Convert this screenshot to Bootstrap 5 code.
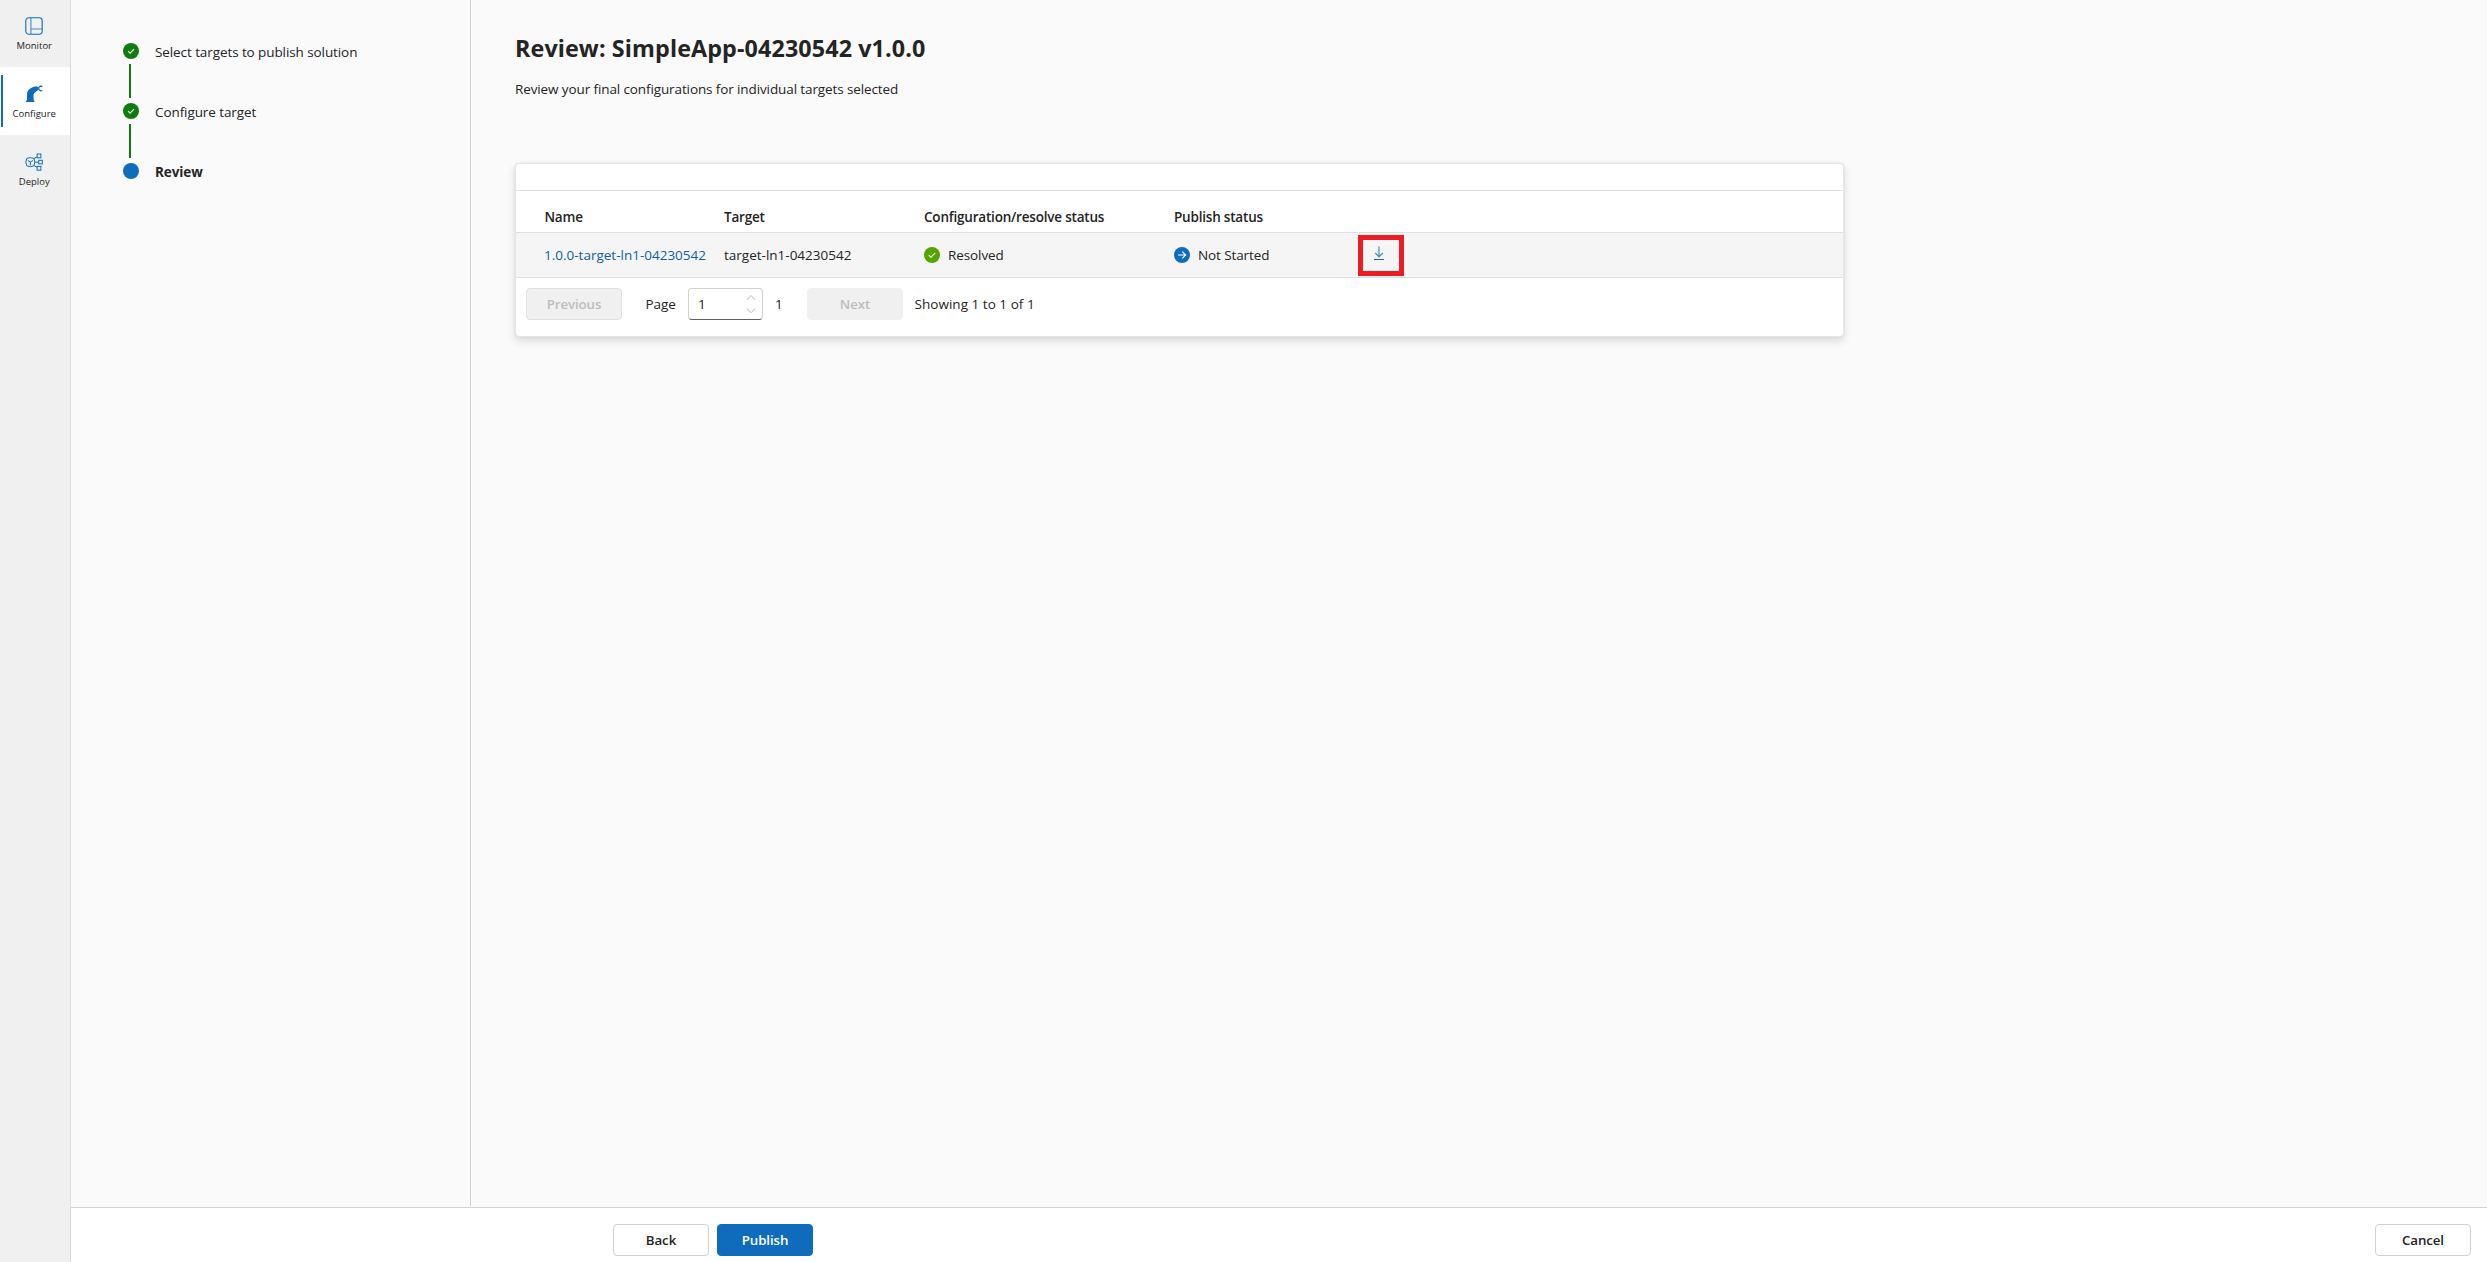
<!DOCTYPE html>
<html lang="en">
<head>
<meta charset="utf-8">
<meta name="viewport" content="width=device-width, initial-scale=1">
<title>Review: SimpleApp-04230542 v1.0.0</title>
<link href="https://cdn.jsdelivr.net/npm/bootstrap@5.3.0/dist/css/bootstrap.min.css" rel="stylesheet">
<style>
html,body{height:100%}
body{font-family:"Open Sans","Noto Sans",sans-serif;font-size:13.5px;letter-spacing:-.09px;line-height:20px;color:#242424;background:#fafafa;overflow:hidden}
svg{display:block;flex:none}
.rail{width:71px;background:#f0f0f0;border-right:1px solid #dcdcdc;flex:none}
.rail a{height:68px;padding:18px 1.5px 0 0;color:#242424;font-size:9.5px;letter-spacing:0;line-height:14px;gap:4px}
.rail a:first-child{height:67px;padding-top:17px}
.rail a.active{background:#fff}
.rail a.active::before{content:"";position:absolute;left:1px;top:8px;width:2px;height:52px;background:#0f6cbd}
.steps{width:400px;border-right:1px solid #d1d1d1;padding:43px 0 0 52px;margin-bottom:1px;flex:none}
.step-row{height:60px;gap:16px}
.step-row .mark-col{width:16px;flex:none}
.step-row .txt{margin-top:-1px}
.line-seg{width:2px;height:34px;margin:5px 0 0 6px;background:#107c10}
.main-area{padding:32px 0 0 44px}
.ttl{font-size:23.3px;letter-spacing:.12px;line-height:32px;font-weight:700;margin:0}
.sub-line{margin-top:15px;letter-spacing:-.11px}
.panel{width:1329px;margin-top:64px;border:1px solid #e6e6e6;border-radius:4px;box-shadow:0 4px 8px rgba(0,0,0,.13),0 0 2px rgba(0,0,0,.1);background:#fff}
.band{height:27px;border-bottom:1px solid #e0e0e0}
.grid-row{padding-left:28.5px;border-bottom:1px solid #e0e0e0}
.grid-row>div{flex:none}
.c1{width:179.5px}.c2{width:200px}.c3{width:250px}.c4{width:184px}
.head-row{height:42px;font-weight:600;letter-spacing:-.2px;padding-top:16px}
.data-row{height:45px;background:#f5f5f5;letter-spacing:0}
.data-row a{color:#115ea3;margin-left:-.5px}
.state{gap:8px}
.state span{letter-spacing:-.1px}
.pager{padding:10px 0 16px 10px}
.pg-label{width:42.5px;margin-left:23.5px}
.pg-total{width:32px;margin-left:12px}
.pg-info{margin-left:11.5px;letter-spacing:.03px}
.abtn{width:96px;height:32px;padding:0;font-size:13.3px;letter-spacing:-.1px;line-height:20px;font-weight:600;border:1px solid #d1d1d1;border-radius:4px;background:#fff;color:#242424}
.abtn:disabled{background:#f0f0f0;color:#bdbdbd;border-color:#e0e0e0;opacity:1}
.abtn.flat:disabled{border-color:#f0f0f0}
.abtn.pri{background:#0f6cbd;border-color:#0f6cbd;color:#fff}
.spin{width:75px;height:32px;border:1px solid #d1d1d1;border-bottom-color:#616161;border-radius:4px;padding:0 5px 0 9px;background:#fff}
.hilite{width:46px;height:41px;border:5px solid #ed1c24;padding:6px 0 0 10px}
.foot{height:55px;background:#fff;border-top:1px solid #d1d1d1;padding:16px 16px 6px 542px}
</style>
</head>
<body class="d-flex">
<nav class="rail d-flex flex-column">
  <a class="d-flex flex-column align-items-center text-decoration-none" href="#">
    <svg width="18" height="18" viewBox="0 0 18 18" fill="none" stroke="#0f6cbd"><rect x=".8" y=".8" width="16.4" height="16.4" rx="3.200" stroke-width="1.100"/><path d="M5.900 1v16M6 12h11" stroke-width="1.100" opacity=".75"/></svg>
    <span>Monitor</span></a>
  <a class="active position-relative d-flex flex-column align-items-center text-decoration-none" href="#">
    <svg width="18" height="18" viewBox="0 0 18 18"><path d="M1 17v-1.200l1-.6V9.500C2 5.500 5.600 2.200 10.500 1.600l1.700-.3 1.200 3.400-3.300 2.500c-1.300 1-1.700 2.200-1.600 3.600l.2 4.400.8.600V17z" fill="#0f6cbd"/><path d="M12 3l2-.4M17.400 1.300 15.300 1.100 13.600 2.600 13.900 4.500 15.500 5.900 17.200 5.700" fill="none" stroke="#0f6cbd" stroke-width="1.200"/></svg>
    <span>Configure</span></a>
  <a class="d-flex flex-column align-items-center text-decoration-none" href="#">
    <svg width="18" height="18" viewBox="0 0 18 18" fill="none" stroke="#0f6cbd"><path d="M5.300 4.600 1.800 5.400.8 9l1 3.800 3.500.9 3.600-.9L9.900 9 8.900 5.400zM2.800 7.500 5.300 9l2.700-1.500M5.300 9v3.300M8.900 5.600 12.100 3.800M9.900 9.200h3.600M8.900 12.500l3.200 1.700"/><rect x="12.100" y="1" width="3.800" height="3.800"/><rect x="13.700" y="7.300" width="3.600" height="3.600"/><rect x="12.100" y="13.400" width="3.800" height="3.800"/></svg>
    <span>Deploy</span></a>
</nav>
<div class="flex-grow-1 d-flex flex-column">
  <div class="flex-grow-1 d-flex">
    <aside class="steps">
      <div class="step-row d-flex">
        <div class="mark-col"><svg width="16" height="16"><circle cx="8" cy="8" r="8" fill="#107c10"/><path d="m5.200 8.200 1.900 1.900 3.900-3.900" fill="none" stroke="#fff" stroke-width="1.100"/></svg><div class="line-seg"></div></div>
        <span class="txt">Select targets to publish solution</span></div>
      <div class="step-row d-flex">
        <div class="mark-col"><svg width="16" height="16"><circle cx="8" cy="8" r="8" fill="#107c10"/><path d="m5.200 8.200 1.900 1.900 3.900-3.900" fill="none" stroke="#fff" stroke-width="1.100"/></svg><div class="line-seg"></div></div>
        <span class="txt">Configure target</span></div>
      <div class="step-row d-flex">
        <div class="mark-col"><svg width="16" height="16"><circle cx="8" cy="8" r="8" fill="#0f6cbd"/></svg></div>
        <span class="txt fw-bold">Review</span></div>
    </aside>
    <main class="main-area">
      <h1 class="ttl">Review: SimpleApp-04230542 v1.0.0</h1>
      <div class="sub-line">Review your final configurations for individual targets selected</div>
      <div class="panel">
        <div class="band"></div>
        <div class="grid-row head-row d-flex">
          <div class="c1">Name</div><div class="c2">Target</div><div class="c3">Configuration/resolve status</div><div class="c4">Publish status</div>
        </div>
        <div class="grid-row data-row d-flex align-items-center">
          <div class="c1"><a class="text-decoration-none" href="#">1.0.0-target-ln1-04230542</a></div>
          <div class="c2">target-ln1-04230542</div>
          <div class="c3 state d-flex align-items-center"><svg width="16" height="16"><circle cx="8" cy="8" r="8" fill="#57a300"/><path d="m4.800 8.200 2.100 2.100 4.300-4.300" fill="none" stroke="#fff" stroke-width="1.100"/></svg><span>Resolved</span></div>
          <div class="c4 state d-flex align-items-center"><svg width="16" height="16"><circle cx="8" cy="8" r="8" fill="#0f6cbd"/><path d="M4 8h7.600M8.300 4.600 11.700 8l-3.400 3.400" fill="none" stroke="#fff" stroke-width="1.100"/></svg><span>Not Started</span></div>
          <div class="hilite"><svg width="12" height="14" viewBox="0 0 12 14" fill="none" stroke="#0f6cbd"><path d="M6 .5v10M2.200 7 6 10.800 9.800 7" stroke-width="1.200" opacity=".75"/><path d="M1 13.500h10"/></svg></div>
        </div>
        <div class="pager d-flex align-items-center">
          <button class="btn abtn" disabled>Previous</button>
          <span class="pg-label">Page</span>
          <div class="spin d-flex align-items-center justify-content-between"><span>1</span><svg width="12" height="20" viewBox="0 0 12 20" fill="none" stroke="#b5b5b5"><path d="m1.800 5.700 4.200-4.200 4.200 4.200M1.800 14.500 6 18.700l4.200-4.200"/></svg></div>
          <span class="pg-total">1</span>
          <button class="btn abtn flat" disabled>Next</button>
          <span class="pg-info">Showing 1 to 1 of 1</span>
        </div>
      </div>
    </main>
  </div>
  <footer class="foot d-flex gap-2"><button class="btn abtn">Back</button><button class="btn abtn pri">Publish</button><button class="btn abtn ms-auto">Cancel</button></footer>
</div>
<script src="https://cdn.jsdelivr.net/npm/bootstrap@5.3.0/dist/js/bootstrap.bundle.min.js"></script>
</body>
</html>
